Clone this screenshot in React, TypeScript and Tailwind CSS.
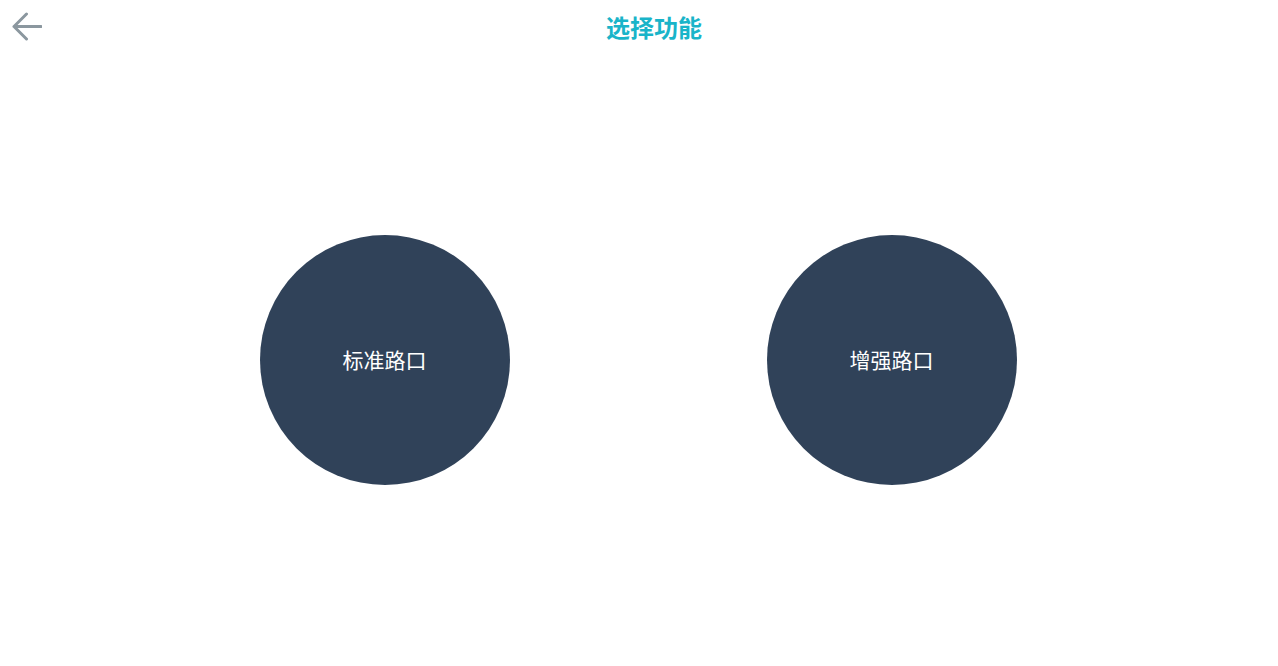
import React from 'react';

const options = ['标准路口', '增强路口'];

const App: React.FC = () => {
  return (
    <div
      className="w-full h-[666px] bg-white flex flex-col"
      style={{ fontFamily: '"Noto Sans CJK SC", "Noto Sans", sans-serif' }}
    >
      <div className="flex items-center h-[54px]">
        <button className="w-[30px] h-[54px] flex items-center justify-start pl-[12px] shrink-0">
          <svg width="30" height="30" viewBox="0 0 30 30" fill="none" className="shrink-0">
            <path
              d="M2 14.5 H29 M14.5 2 L2 14.5 L14.5 27"
              stroke="#8b979f"
              strokeWidth="3"
              strokeLinecap="round"
              strokeLinejoin="round"
            />
          </svg>
        </button>
        <h1 className="flex-1 text-center text-[24px] font-bold text-[#19b4c9] leading-none">选择功能</h1>
      </div>
      <div className="flex-1 flex items-center justify-center gap-[257px] pr-[2px]">
        {options.map((o) => (
          <button
            key={o}
            className="w-[250px] h-[250px] rounded-full bg-[#304259] flex items-center justify-center text-white text-[21px]"
          >
            {o}
          </button>
        ))}
      </div>
    </div>
  );
};

export default App;
